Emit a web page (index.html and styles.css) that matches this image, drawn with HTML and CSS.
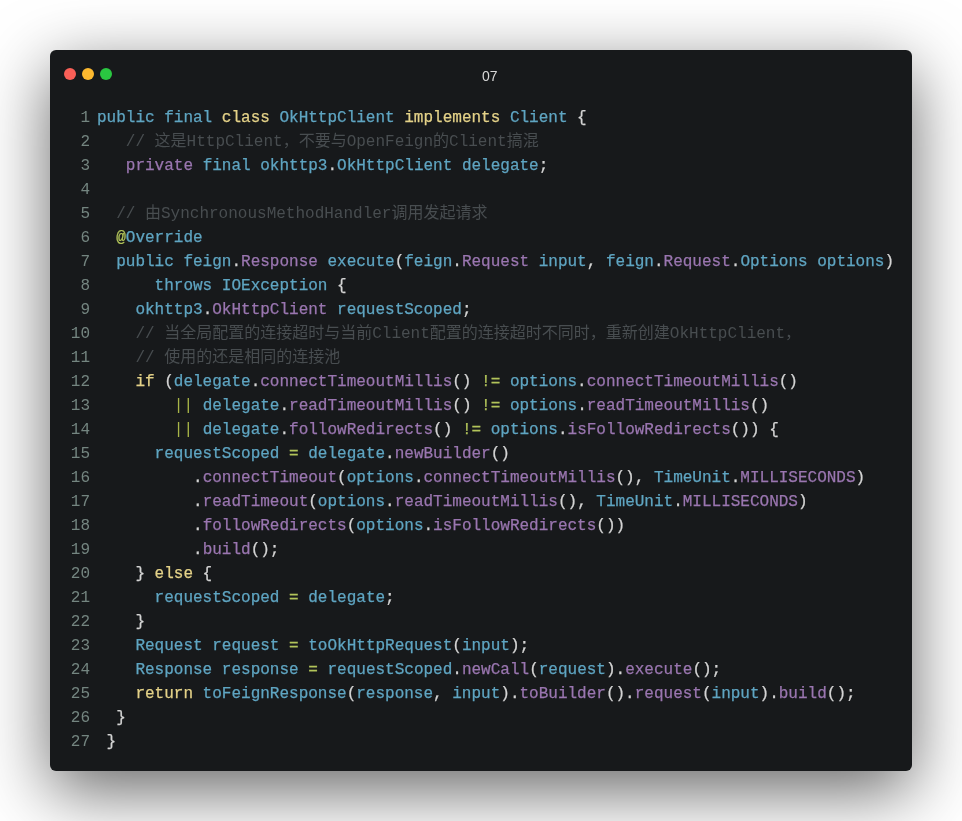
FILE: index.html
```html
<!DOCTYPE html>
<html lang="zh">
<head>
<meta charset="utf-8">
<title>07</title>
<link rel="stylesheet" href="styles.css">
</head>
<body>
<main class="window">
<header class="titlebar">
<div class="lights"><span class="light red"></span><span class="light yellow"></span><span class="light green"></span></div>
<div class="title">07</div>
</header>
<div class="code">
<div class="row"><span class="num">1</span><code><i>public final </i><b>class</b><i> OkHttpClient </i><b>implements</b><i> Client </i>{</code></div>
<div class="row"><span class="num">2</span><code><s>   // 这是HttpClient，不要与OpenFeign的Client搞混</s></code></div>
<div class="row"><span class="num">3</span><code>   <u>private</u><i> final okhttp3</i>.<i>OkHttpClient delegate</i>;</code></div>
<div class="row"><span class="num">4</span><code></code></div>
<div class="row"><span class="num">5</span><code><s>  // 由SynchronousMethodHandler调用发起请求</s></code></div>
<div class="row"><span class="num">6</span><code>  <em>@</em><i>Override</i></code></div>
<div class="row"><span class="num">7</span><code><i>  public feign</i>.<u>Response</u><i> execute</i>(<i>feign</i>.<u>Request</u><i> input</i>, <i>feign</i>.<u>Request</u>.<i>Options options</i>)</code></div>
<div class="row"><span class="num">8</span><code><i>      throws IOException </i>{</code></div>
<div class="row"><span class="num">9</span><code><i>    okhttp3</i>.<u>OkHttpClient</u><i> requestScoped</i>;</code></div>
<div class="row"><span class="num">10</span><code><s>    // 当全局配置的连接超时与当前Client配置的连接超时不同时，重新创建OkHttpClient，</s></code></div>
<div class="row"><span class="num">11</span><code><s>    // 使用的还是相同的连接池</s></code></div>
<div class="row"><span class="num">12</span><code>    <b>if</b> (<i>delegate</i>.<u>connectTimeoutMillis</u>() <em>!=</em> <i>options</i>.<u>connectTimeoutMillis</u>()</code></div>
<div class="row"><span class="num">13</span><code>        <em class="thin">||</em> <i>delegate</i>.<u>readTimeoutMillis</u>() <em>!=</em> <i>options</i>.<u>readTimeoutMillis</u>()</code></div>
<div class="row"><span class="num">14</span><code>        <em class="thin">||</em> <i>delegate</i>.<u>followRedirects</u>() <em>!=</em> <i>options</i>.<u>isFollowRedirects</u>()) {</code></div>
<div class="row"><span class="num">15</span><code><i>      requestScoped</i> <em>=</em> <i>delegate</i>.<u>newBuilder</u>()</code></div>
<div class="row"><span class="num">16</span><code>          .<u>connectTimeout</u>(<i>options</i>.<u>connectTimeoutMillis</u>(), <i>TimeUnit</i>.<u>MILLISECONDS</u>)</code></div>
<div class="row"><span class="num">17</span><code>          .<u>readTimeout</u>(<i>options</i>.<u>readTimeoutMillis</u>(), <i>TimeUnit</i>.<u>MILLISECONDS</u>)</code></div>
<div class="row"><span class="num">18</span><code>          .<u>followRedirects</u>(<i>options</i>.<u>isFollowRedirects</u>())</code></div>
<div class="row"><span class="num">19</span><code>          .<u>build</u>();</code></div>
<div class="row"><span class="num">20</span><code>    } <b>else</b> {</code></div>
<div class="row"><span class="num">21</span><code><i>      requestScoped</i> <em>=</em> <i>delegate</i>;</code></div>
<div class="row"><span class="num">22</span><code>    }</code></div>
<div class="row"><span class="num">23</span><code><i>    Request request</i> <em>=</em> <i>toOkHttpRequest</i>(<i>input</i>);</code></div>
<div class="row"><span class="num">24</span><code><i>    Response response</i> <em>=</em> <i>requestScoped</i>.<u>newCall</u>(<i>request</i>).<u>execute</u>();</code></div>
<div class="row"><span class="num">25</span><code>    <b>return</b><i> toFeignResponse</i>(<i>response</i>, <i>input</i>).<u>toBuilder</u>().<u>request</u>(<i>input</i>).<u>build</u>();</code></div>
<div class="row"><span class="num">26</span><code>  }</code></div>
<div class="row"><span class="num">27</span><code> }</code></div>
</div>
</main>
</body>
</html>
```
FILE: styles.css
```css
* { box-sizing: border-box; }
html, body { margin: 0; height: 821px; overflow: hidden; background: #fff; }
body { padding: 50px; }
.window {
  width: 862px;
  height: 721px;
  background: #17191b;
  border-radius: 6px;
  box-shadow: 0 20px 68px rgba(0, 0, 0, .6);
}
.titlebar { display: flex; align-items: flex-start; padding: 18px 14px 0; height: 56px; filter: blur(.3px); }
.lights { display: flex; gap: 6px; }
.light { width: 12px; height: 12px; border-radius: 50%; }
.red { background: #f95f57; }
.yellow { background: #fdb92f; }
.green { background: #2ac741; }
.title {
  margin-left: 370px;
  color: #d8d8d8;
  font: 14px/16px "Liberation Sans", Arial, sans-serif;
}
.code {
  font: 16px/24px "Liberation Mono", "Noto Sans CJK SC", monospace;
  color: #d4d4d4;
  filter: blur(.35px);
}
.row { display: flex; height: 24px; }
.num { width: 40px; margin-right: 7px; text-align: right; color: #748580; }
code { font: inherit; white-space: pre; -webkit-text-stroke: .25px currentColor; }
code i { font-style: normal; color: #5fa5c2; }
code b { font-weight: inherit; color: #e4d288; }
code u { text-decoration: none; color: #9a76b0; }
code em { font-style: normal; color: #b2c45a; }
code em.thin { -webkit-text-stroke: 0; color: #a8b548; }
code s { text-decoration: none; color: #484d50; -webkit-text-stroke: 0; }
```
